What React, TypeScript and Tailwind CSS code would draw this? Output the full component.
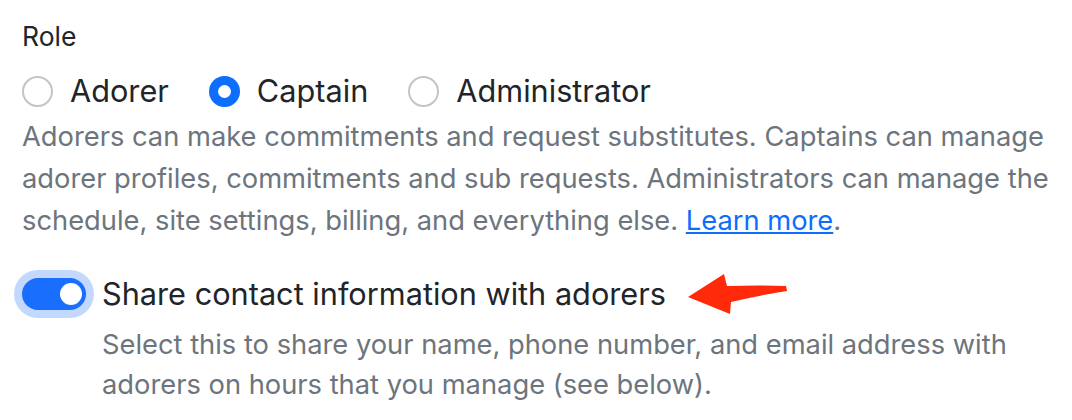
import React from "react";

const roles = ["Adorer", "Captain", "Administrator"];

const Radio = ({ checked }: { checked: boolean }) =>
  checked ? (
    <span className="w-[31px] h-[31px] rounded-full bg-[#0d6efd] flex items-center justify-center shrink-0">
      <span className="w-[13px] h-[13px] rounded-full bg-white" />
    </span>
  ) : (
    <span className="w-[31px] h-[31px] rounded-full border-2 border-[#c4c4c4] bg-white shrink-0" />
  );

const App = () => {
  return (
    <div className="w-[1072px] h-[420px] bg-white overflow-hidden px-[22px] pt-[18px] font-['Inter',sans-serif] text-[#212529]">
      <div className="text-[26.5px] leading-[36px]">Role</div>

      <div className="flex items-center gap-[40px] mt-[20px] h-[34px]">
        {roles.map((r) => (
          <label key={r} className="flex items-center gap-[17px] text-[30.7px]">
            <Radio checked={r === "Captain"} />
            <span>{r}</span>
          </label>
        ))}
      </div>

      <p className="text-[27.3px] leading-[42px] text-[#6c757d] mt-[8px]">
        Adorers can make commitments and request substitutes. Captains can manage adorer profiles, commitments and sub
        requests. Administrators can manage the schedule, site settings, billing, and everything else.{" "}
        <a href="#" className="text-[#0d6efd] underline">
          Learn more
        </a>
        .
      </p>

      <div className="flex mt-[28px] ml-[-8px]">
        <div className="w-[80px] h-[48px] rounded-full bg-[#c2d8fd] p-[8px] shrink-0">
          <div className="w-full h-full rounded-full bg-[#1a6efd] flex items-center justify-end pr-[4px]">
            <span className="w-[22px] h-[22px] rounded-full bg-white" />
          </div>
        </div>
        <div className="ml-[8px]">
          <div className="flex items-center h-[48px]">
            <span className="text-[30.7px]">Share contact information with adorers</span>
            <svg className="ml-[20px]" width="102" height="44" viewBox="685 271 102 44">
              <path
                d="M687,296 L723,273 L726,285 Q760,284 785,285 L786,290 Q760,294 730,301 L729,313 Z"
                fill="#ff2a0a"
              />
            </svg>
          </div>
          <p className="text-[27.3px] leading-[40px] text-[#6c757d] mt-[7px] w-[940px]">
            Select this to share your name, phone number, and email address with adorers on hours that you manage (see
            below).
          </p>
        </div>
      </div>
    </div>
  );
};

export default App;
